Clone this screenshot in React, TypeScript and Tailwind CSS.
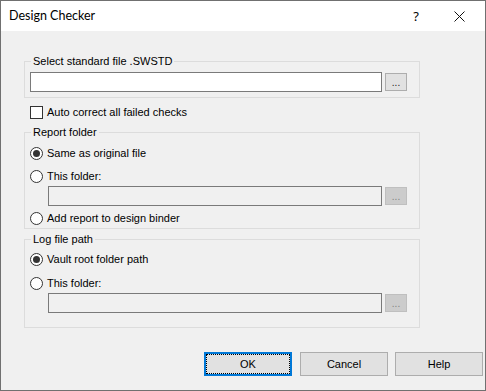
import type { ReactNode } from "react";

const UI_FONT = "font-['Liberation_Sans',Arial,sans-serif]";

function Radio({ checked }: { checked?: boolean }) {
  return (
    <span className="flex h-[13px] w-[13px] shrink-0 items-center justify-center rounded-full border border-[#333333] bg-white">
      {checked && <span className="h-[7px] w-[7px] rounded-full bg-[#333333]" />}
    </span>
  );
}

function RadioRow({ label, checked }: { label: string; checked?: boolean }) {
  return (
    <div className="flex h-[13px] items-center gap-[4px]">
      <Radio checked={checked} />
      <span className="text-[11px] leading-[13px] text-black">{label}</span>
    </div>
  );
}

function Browse({ disabled }: { disabled?: boolean }) {
  return (
    <button
      type="button"
      className={
        disabled
          ? "mt-[1px] flex h-[18px] w-[22px] items-end justify-center border border-[#bfbfbf] bg-[#cccccc] pb-[2px] text-[10px] leading-[10px] text-[#838383]"
          : "mt-[1px] flex h-[18px] w-[22px] items-end justify-center border border-[#adadad] bg-[#e1e1e1] pb-[2px] text-[10px] leading-[10px] text-[#1a1a1a]"
      }
    >
      ...
    </button>
  );
}

function PathRow({ width, disabled }: { width: string; disabled?: boolean }) {
  return (
    <div className="flex items-start gap-[3px]">
      <div
        className={
          disabled
            ? `h-[20px] ${width} border border-[#7a7a7a] bg-[#f0f0f0]`
            : `h-[20px] ${width} border border-[#7a7a7a] bg-white`
        }
      />
      <Browse disabled={disabled} />
    </div>
  );
}

function Group({ title, className, children }: { title: string; className: string; children: ReactNode }) {
  return (
    <fieldset className={`w-[396px] border border-[#dcdcdc] ${className}`}>
      <legend className="ml-[6px] px-[2px] text-[11px] leading-[14px] text-black">{title}</legend>
      {children}
    </fieldset>
  );
}

function DialogButton({ label, focused }: { label: string; focused?: boolean }) {
  if (focused) {
    return (
      <button
        type="button"
        className="flex h-[24px] w-[88px] border-2 border-[#0078d7] bg-[#e1e1e1] text-[11px] text-black"
      >
        <span className="flex flex-1 items-center justify-center border border-dotted border-black">{label}</span>
      </button>
    );
  }
  return (
    <button
      type="button"
      className="flex h-[24px] w-[88px] items-center justify-center border border-[#adadad] bg-[#e1e1e1] text-[11px] text-black"
    >
      {label}
    </button>
  );
}

export default function App() {
  return (
    <div className={`flex h-[391px] w-[486px] flex-col border border-[#707070] bg-[#f0f0f0] ${UI_FONT}`}>
      <div className="flex h-[30px] shrink-0 items-center bg-white">
        <span className="ml-[8px] font-['Lato',sans-serif] text-[12.5px] leading-[16px] text-black">
          Design Checker
        </span>
        <span className="ml-auto mr-[35px] font-['Noto_Sans',sans-serif] text-[13px] leading-[16px] text-black">?</span>
        <svg width="11" height="11" viewBox="0 0 11 11" className="mr-[20px]">
          <path d="M0.5 0.5 L10.5 10.5 M10.5 0.5 L0.5 10.5" stroke="#111" strokeWidth="1" fill="none" />
        </svg>
      </div>

      <div className="flex flex-1 flex-col pl-[23px]">
        <Group title="Select standard file .SWSTD" className="mt-[23px]">
          <div className="pb-[5px] pl-[5px] pt-[4px]">
            <PathRow width="w-[352px]" />
          </div>
        </Group>

        <div className="ml-[6px] mt-[8px] flex h-[13px] items-center gap-[4px]">
          <span className="h-[13px] w-[13px] border border-[#333333] bg-white" />
          <span className="text-[11px] leading-[13px] text-black">Auto correct all failed checks</span>
        </div>

        <Group title="Report folder" className="mt-[6px]">
          <div className="flex flex-col pb-[3px] pl-[5px] pt-[8px]">
            <RadioRow label="Same as original file" checked />
            <div className="mt-[10px]">
              <RadioRow label="This folder:" />
            </div>
            <div className="ml-[18px] mt-[3px]">
              <PathRow width="w-[334px]" disabled />
            </div>
            <div className="mt-[6px]">
              <RadioRow label="Add report to design binder" />
            </div>
          </div>
        </Group>

        <Group title="Log file path" className="mt-[3px]">
          <div className="flex flex-col pb-[14px] pl-[5px] pt-[7px]">
            <RadioRow label="Vault root folder path" checked />
            <div className="mt-[11px]">
              <RadioRow label="This folder:" />
            </div>
            <div className="ml-[18px] mt-[3px]">
              <PathRow width="w-[334px]" disabled />
            </div>
          </div>
        </Group>

        <div className="ml-[180px] mt-[24px] flex">
          <DialogButton label="OK" focused />
          <div className="ml-[8px]">
            <DialogButton label="Cancel" />
          </div>
          <div className="ml-[7px]">
            <DialogButton label="Help" />
          </div>
        </div>
      </div>
    </div>
  );
}
